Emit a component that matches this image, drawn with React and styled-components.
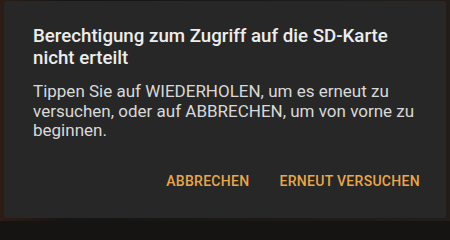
import React from 'react';
import styled, { createGlobalStyle } from 'styled-components';

const Global = createGlobalStyle`
  html, body {
    margin: 0;
    padding: 0;
    width: 450px;
    height: 221px;
    overflow: hidden;
    background: #161412;
  }
`;

const Backdrop = styled.div`
  width: 450px;
  height: 221px;
  padding: 1px 4px 3px 4px;
  box-sizing: border-box;
  background: linear-gradient(90deg, #2e1c16 0%, #151515 15%, #1b1a18 60%, #231d19 100%);
`;

const Dialog = styled.div`
  height: 100%;
  display: flex;
  flex-direction: column;
  background: #272727;
  border-radius: 2px;
  padding: 24px 26px 0 29px;
  box-sizing: border-box;
  font-family: Roboto, "Liberation Sans", sans-serif;
`;

const Title = styled.h2`
  margin: 0;
  font-size: 18.7px;
  font-weight: 500;
  line-height: 22px;
  color: #ededed;
`;

const Message = styled.p`
  margin: 13px 0 0 0;
  font-size: 17px;
  font-weight: 400;
  line-height: 19.5px;
  color: #d9d9d9;
`;

const Actions = styled.div`
  display: flex;
  justify-content: flex-end;
  gap: 30px;
  margin-top: auto;
  padding-bottom: 29px;
`;

const Action = styled.button`
  background: none;
  border: none;
  padding: 0;
  font-family: inherit;
  font-size: 14px;
  font-weight: 500;
  line-height: 16px;
  letter-spacing: 0.3px;
  color: #e9a64c;
  text-transform: uppercase;
`;

export default function App() {
  return (
    <>
      <Global />
      <Backdrop>
        <Dialog>
          <Title>Berechtigung zum Zugriff auf die SD-Karte nicht erteilt</Title>
          <Message>
            Tippen Sie auf WIEDERHOLEN, um es erneut zu versuchen, oder auf ABBRECHEN, um von vorne zu beginnen.
          </Message>
          <Actions>
            <Action>Abbrechen</Action>
            <Action>Erneut versuchen</Action>
          </Actions>
        </Dialog>
      </Backdrop>
    </>
  );
}
